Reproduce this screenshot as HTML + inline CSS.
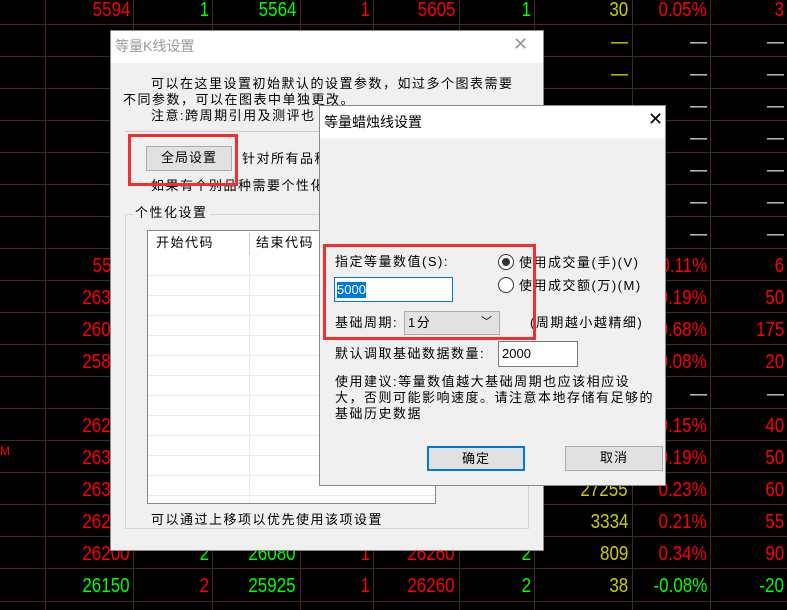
<!DOCTYPE html>
<html><head><meta charset="utf-8"><style>
*{margin:0;padding:0;box-sizing:border-box}
html,body{width:787px;height:610px;overflow:hidden}
body{background:#000;position:relative;font-family:"Liberation Sans","Noto Sans CJK SC",sans-serif}
.h{position:absolute;left:0;width:787px;height:1px;background:#4a2818}
.v{position:absolute;top:0;height:610px;width:1px;background:#4a2818}
.c{position:absolute;font-family:"Liberation Sans Narrow","Liberation Sans",sans-serif;font-size:20px;line-height:22px;text-align:right;transform-origin:right center;white-space:nowrap}
.r{color:#f00}.g{color:#0f0}.y{color:#cc0}.w{color:#ccc}
.dlg{position:absolute;background:#f0f0f0;border:1px solid #888;font-size:13px;color:#000;overflow:hidden}
.tb{position:absolute;left:0;top:0;right:0;height:32px;background:#fff}
.a{position:absolute;white-space:nowrap;line-height:16px;letter-spacing:1.5px;font-family:"Liberation Sans","Noto Sans CJK SC",sans-serif}
.btn{position:absolute;background:#e1e1e1;border:1px solid #adadad;text-align:center;line-height:22px;letter-spacing:1px}
.red{position:absolute;border:3px solid #f03030}
</style></head><body>
<div class="h" style="top:24px"></div><div class="h" style="top:56px"></div><div class="h" style="top:88px"></div><div class="h" style="top:120px"></div><div class="h" style="top:152px"></div><div class="h" style="top:184px"></div><div class="h" style="top:216px"></div><div class="h" style="top:248px"></div><div class="h" style="top:280px"></div><div class="h" style="top:312px"></div><div class="h" style="top:344px"></div><div class="h" style="top:376px"></div><div class="h" style="top:408px"></div><div class="h" style="top:440px"></div><div class="h" style="top:472px"></div><div class="h" style="top:504px"></div><div class="h" style="top:536px"></div><div class="h" style="top:568px"></div><div class="h" style="top:601px"></div>
<div class="v" style="left:45px"></div><div class="v" style="left:133px"></div><div class="v" style="left:212px"></div><div class="v" style="left:300px"></div><div class="v" style="left:373px"></div><div class="v" style="left:459px"></div><div class="v" style="left:534px"></div><div class="v" style="left:632px"></div><div class="v" style="left:710px"></div>
<div id="cells"></div>
<script>
var cols=[130,209,296,370,455,531,628,707,784];
var rows=[
["r5594","g1","g5564","r1","r5605","g1","y30","r0.05%","r3"],
["","","","","","","y—","w—","w—"],
["","","","","","","y—","w—","w—"],
["","","","","","","y—","w—","w—"],
["","","","","","","","w—","w—"],
["","","","","","","","w—","w—"],
["","","","","","","","w—","w—"],
["","","","","","","","w—","w—"],
["r5550","","","","","","","r0.11%","r6"],
["r26300","","","","","","","r0.19%","r50"],
["r26000","","","","","","","r0.68%","r175"],
["r25800","","","","","","","r0.08%","r20"],
["","","","","","","","w—","w—"],
["r26200","","","","","","","r0.15%","r40"],
["r26300","","","","","","","r0.19%","r50"],
["r26300","","","","","","y27255","r0.23%","r60"],
["r26200","","","","","","y3334","r0.21%","r55"],
["r26200","g2","g26080","r1","r26260","g2","y809","r0.34%","r90"],
["g26150","r2","g25925","r1","r26260","g2","y38","g-0.08%","g-20"]];
var h="";
rows.forEach(function(r,i){r.forEach(function(t,j){if(!t)return;var cl=t[0],tx=t.slice(1);var top=i*32-1;
h+='<div class="c '+cl+'" style="right:'+(787-cols[j])+'px;top:'+top+'px;transform:scaleX(0.85)">'+tx+'</div>';});});
h+='<div class="c r" style="left:0;top:440px;font-size:12px;text-align:left">M</div>';
document.getElementById("cells").innerHTML=h;
</script>

<div class="dlg" style="left:110px;top:30px;width:434px;height:521px">
<div class="tb"></div>
<div class="a" style="left:4px;top:7px;font-size:14px;color:#999;letter-spacing:0">等量K线设置</div>
<div class="a" style="left:402px;top:5px;font-size:18px;color:#999;font-weight:300">✕</div>
<div class="a" style="left:40px;top:45px">可以在这里设置初始默认的设置参数，如过多个图表需要</div>
<div class="a" style="left:12px;top:61px">不同参数，可以在图表中单独更改。</div>
<div class="a" style="left:40px;top:77px">注意:跨周期引用及测评也</div>
<div style="position:absolute;left:14px;top:100px;width:410px;height:1px;background:#ccc"></div>
<div class="btn" style="left:35px;top:115px;width:86px;height:25px">全局设置</div>
<div class="a" style="left:131px;top:120px">针对所有品种</div>
<div class="a" style="left:40px;top:147px">如果有个别品种需要个性化</div>
<div style="position:absolute;left:14px;top:183px;width:404px;height:315px;border:1px solid #d5d5d5"></div>
<div class="a" style="left:22px;top:174px;background:#f0f0f0;padding:0 2px">个性化设置</div>
<div style="position:absolute;left:36px;top:199px;width:289px;height:274px;background:#fff;border:1px solid #888;overflow:hidden">
<div style="position:absolute;left:0;top:25px;width:100%;height:250px;background:repeating-linear-gradient(to bottom,#fff 0 19px,#ececec 19px 20px)"></div>
<div style="position:absolute;left:101px;top:25px;width:1px;height:250px;background:#ececec"></div>
<div style="position:absolute;left:101px;top:2px;width:1px;height:22px;background:#ccc"></div>
<div class="a" style="left:8px;top:4px">开始代码</div>
<div class="a" style="left:108px;top:4px">结束代码</div>
</div>
<div class="a" style="left:40px;top:481px">可以通过上移项以优先使用该项设置</div>
</div>
<div class="red" style="left:128px;top:134px;width:110px;height:52px"></div>

<div class="dlg" style="left:319px;top:105px;width:347px;height:381px">
<div class="tb"></div>
<div class="a" style="left:4px;top:8px;font-size:14px;letter-spacing:0">等量蜡烛线设置</div>
<div class="a" style="left:328px;top:5px;font-size:18px;font-weight:300">✕</div>
<div class="a" style="left:15px;top:148px">指定等量数值(S):</div>
<div style="position:absolute;left:178px;top:148px;width:16px;height:16px;border:1px solid #333;border-radius:50%;background:#fff"><div style="position:absolute;left:3px;top:3px;width:8px;height:8px;border-radius:50%;background:#333"></div></div>
<div class="a" style="left:199px;top:149px">使用成交量(手)(V)</div>
<div style="position:absolute;left:178px;top:171px;width:16px;height:16px;border:1px solid #333;border-radius:50%;background:#fff"></div>
<div class="a" style="left:199px;top:172px">使用成交额(万)(M)</div>
<div style="position:absolute;left:14px;top:171px;width:119px;height:25px;border:1px solid #0078d7;background:#fff"><span style="position:absolute;left:2px;top:4px;background:#0078d7;color:#fff;line-height:16px">5000</span></div>
<div class="a" style="left:15px;top:209px">基础周期:</div>
<div style="position:absolute;left:84px;top:205px;width:96px;height:24px;border:1px solid #adadad;background:#e1e1e1"><span class="a" style="left:3px;top:3px">1分</span><span class="a" style="left:76px;top:2px;font-size:11px">﹀</span></div>
<div class="a" style="left:210px;top:209px">(周期越小越精细)</div>
<div class="a" style="left:15px;top:240px">默认调取基础数据数量:</div>
<div style="position:absolute;left:178px;top:235px;width:80px;height:26px;border:1px solid #7a7a7a;background:#fff"><span class="a" style="left:3px;top:4px;letter-spacing:0">2000</span></div>
<div class="a" style="left:15px;top:268px">使用建议:等量数值越大基础周期也应该相应设</div>
<div class="a" style="left:15px;top:284px">大，否则可能影响速度。请注意本地存储有足够的</div>
<div class="a" style="left:15px;top:300px">基础历史数据</div>
<div class="btn" style="left:107px;top:340px;width:98px;height:25px;border:2px solid #0078d7">确定</div>
<div class="btn" style="left:245px;top:340px;width:98px;height:25px">取消</div>
</div>
<div class="red" style="left:323px;top:244px;width:213px;height:96px"></div>
</body></html>
